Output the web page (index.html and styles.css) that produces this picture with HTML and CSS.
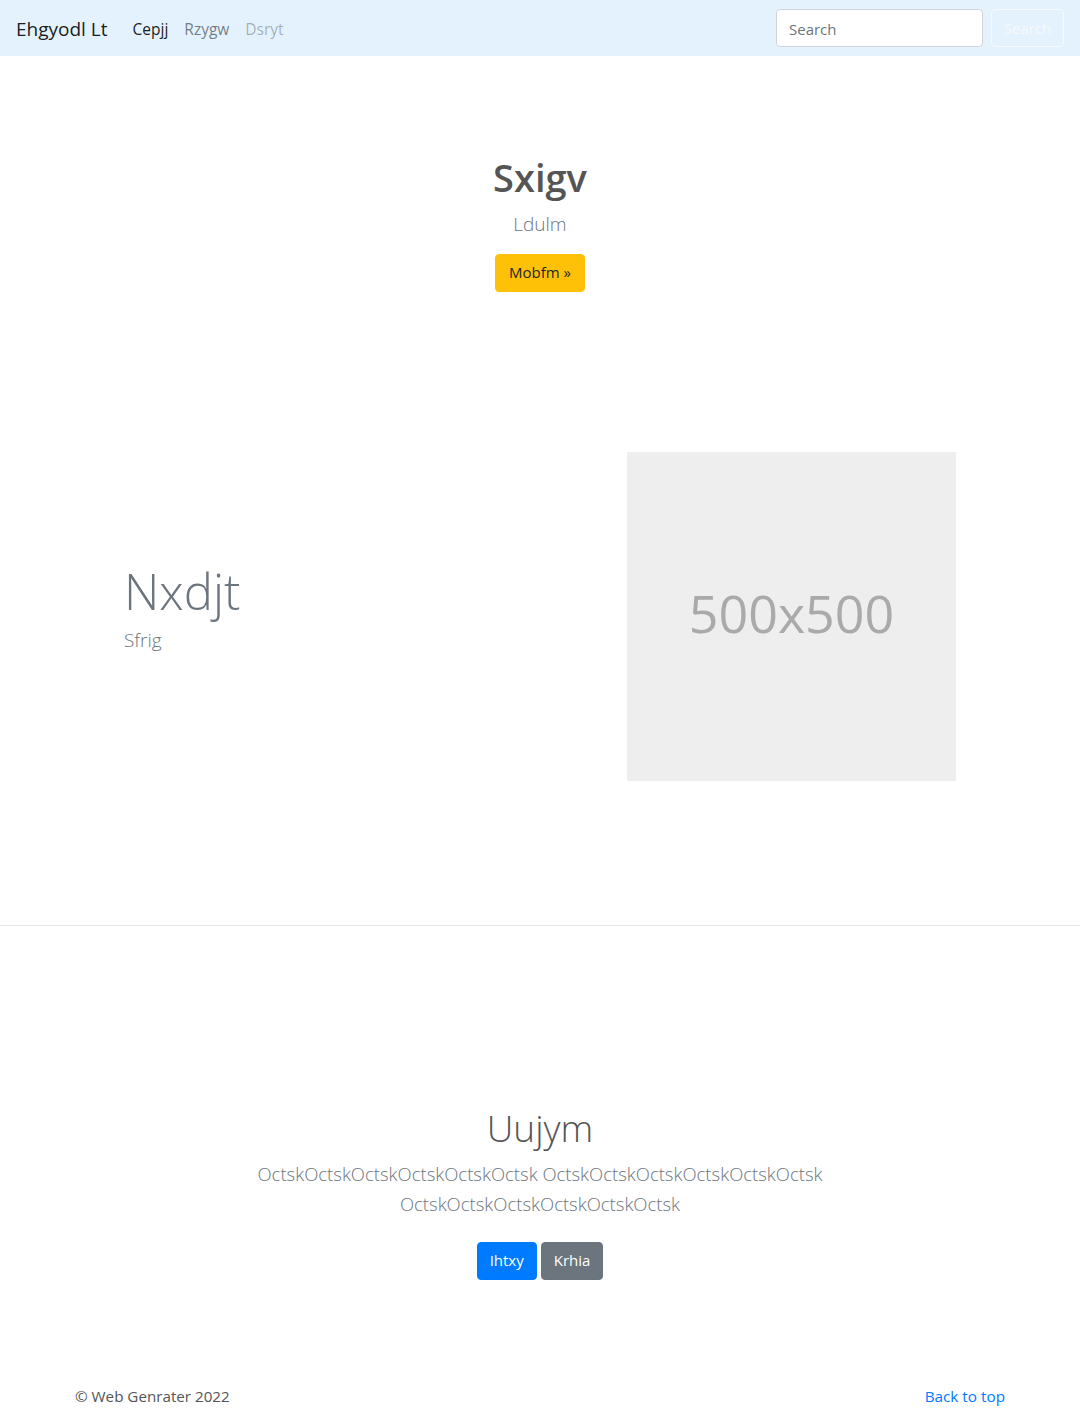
FILE: index.html
```html
<!DOCTYPE html>
<html lang="en">
<head>
<meta charset="utf-8">
<title>Ehgyodl Lt</title>
<link rel="stylesheet" href="styles.css">
</head>
<body>
<nav class="navbar">
  <a class="brand" href="#">Ehgyodl Lt</a>
  <ul class="nav-links">
    <li><a class="nav-link active" href="#">Cepjj</a></li>
    <li><a class="nav-link" href="#">Rzygw</a></li>
    <li><a class="nav-link disabled" href="#">Dsryt</a></li>
  </ul>
  <form class="search">
    <input class="search-input" type="text" placeholder="Search">
    <button class="btn btn-outline-light" type="button">Search</button>
  </form>
</nav>

<section class="hero">
  <h1 class="hero-title">Sxigv</h1>
  <p class="hero-lead">Ldulm</p>
  <a class="btn btn-warning" href="#">Mobfm &raquo;</a>
</section>

<section class="feature">
  <div class="feature-text">
    <h2 class="feature-title">Nxdjt</h2>
    <p class="feature-lead">Sfrig</p>
  </div>
  <div class="feature-media">
    <div class="placeholder">500x500</div>
  </div>
</section>

<hr class="divider">

<section class="cta">
  <h2 class="cta-title">Uujym</h2>
  <p class="cta-lead">OctskOctskOctskOctskOctskOctsk OctskOctskOctskOctskOctskOctsk OctskOctskOctskOctskOctskOctsk</p>
  <div class="cta-buttons">
    <a class="btn btn-primary" href="#">Ihtxy</a>
    <a class="btn btn-secondary" href="#">Krhia</a>
  </div>
</section>

<footer class="footer">
  <p class="copy">&copy; Web Genrater 2022</p>
  <a class="back" href="#">Back to top</a>
</footer>
</body>
</html>
```

FILE: styles.css
```css
* { box-sizing: border-box; }
html, body { margin: 0; padding: 0; }
body {
  font-family: "Open Sans", "Noto Sans", "Liberation Sans", sans-serif;
  font-size: 16px;
  line-height: 1.5;
  color: #212529;
  background: #fff;
  width: 1080px;
  height: 1408px;
  overflow: hidden;
}
a { text-decoration: none; }

/* navbar */
.navbar {
  height: 56px;
  background: #e3f2fd;
  display: flex;
  align-items: center;
  padding: 0 16px;
}
.brand {
  font-size: 19px;
  color: rgba(0,0,0,.9);
  margin-right: 17px;
  line-height: 30px;
  padding-top: 2px;
}
.nav-links {
  list-style: none;
  display: flex;
  margin: 0;
  padding: 0;
  flex: 1;
}
.nav-link {
  display: block;
  padding: 10px 8px 6px;
  font-size: 15.5px;
  color: rgba(0,0,0,.5);
}
.nav-link.active { color: rgba(0,0,0,.9); }
.nav-link.disabled { color: rgba(0,0,0,.3); }
.search { display: flex; align-items: center; gap: 8px; }
.search-input {
  width: 207px;
  height: 38px;
  border: 1px solid #ced4da;
  border-radius: 4px;
  padding: 7px 12px 5px;
  font: inherit;
  font-size: 15px;
  color: #495057;
  background: #fff;
}
.search-input::placeholder { color: #6c757d; }

.btn {
  display: inline-block;
  height: 38px;
  line-height: 24px;
  padding: 6px 12px;
  border: 1px solid transparent;
  border-radius: 4px;
  font: inherit;
  font-size: 15px;
  text-align: center;
  cursor: pointer;
}
.btn-outline-light {
  background: transparent;
  border-color: #f8f9fa;
  color: #f8f9fa;
  width: 73px;
  padding: 6px 0;
}
.btn-warning { background: #ffc107; border-color: #ffc107; color: #212529; }
.btn-primary { background: #007bff; border-color: #007bff; color: #fff; }
.btn-secondary { background: #6c757d; border-color: #6c757d; color: #fff; }

/* hero */
.hero {
  text-align: center;
  padding-top: 97px;
}
.hero-title {
  margin: 0;
  font-size: 38px;
  font-weight: 600;
  line-height: 48px;
  color: #555;
}
.hero-lead {
  margin: 8px 0 15px;
  font-size: 19px;
  font-weight: 300;
  line-height: 30px;
  color: #6c757d;
}
.hero .btn { width: 90px; padding: 6px 0; }

/* feature */
.feature {
  width: 960px;
  margin: 160px auto 0;
  display: grid;
  grid-template-columns: 480px 480px;
  height: 473px;
}
.feature-text { padding: 106px 0 0 64px; }
.feature-title {
  margin: 0;
  font-size: 49px;
  font-weight: 300;
  line-height: 67px;
  color: #6c757d;
}
.feature-lead {
  margin: 0;
  font-size: 19px;
  font-weight: 300;
  line-height: 30px;
  color: #6c757d;
}
.feature-media { padding-left: 87px; }
.placeholder {
  width: 329px;
  height: 329px;
  background: #eee;
  color: #aaa;
  display: flex;
  align-items: center;
  justify-content: center;
  font-size: 52px;
  line-height: 1;
  padding-bottom: 8px;
}

.divider {
  margin: 0;
  border: 0;
  border-top: 1px solid rgba(0,0,0,.1);
}

/* cta */
.cta {
  text-align: center;
  padding-top: 178px;
}
.cta-title {
  margin: 0;
  font-size: 37px;
  font-weight: 300;
  line-height: 48px;
  color: #555;
}
.cta-lead {
  width: 610px;
  margin: 7px auto 23px;
  font-size: 18.5px;
  font-weight: 300;
  line-height: 30px;
  color: #6c757d;
}
.cta-buttons { display: flex; justify-content: center; gap: 4px; }
.cta-buttons .btn { padding: 6px 12px; }

/* footer */
.footer {
  width: 960px;
  margin: 104px auto 0;
  padding: 0 15px;
  display: flex;
  justify-content: space-between;
  align-items: center;
  line-height: 24px;
}
.copy { margin: 0; color: #555; font-size: 15.2px; }
.back { color: #007bff; font-size: 15.3px; }
```
